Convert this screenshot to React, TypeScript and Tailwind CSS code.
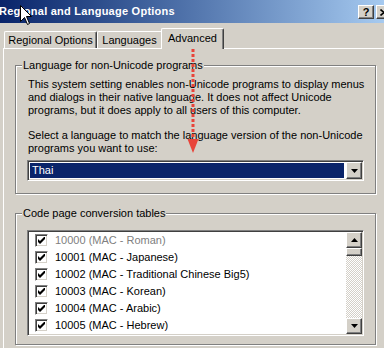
import React from "react";

const raised =
  "border border-t-white border-l-white border-r-[#404040] border-b-[#404040] shadow-[inset_-1px_-1px_0_#808080]";
const sunken =
  "border border-t-[#808080] border-l-[#808080] border-r-white border-b-white shadow-[inset_1px_1px_0_#404040,inset_-1px_-1px_0_#d4d0c8] p-[1px]";

function DownTri() {
  return (
    <svg width="7" height="4" viewBox="0 0 7 4">
      <path d="M0 0H7L3.5 4Z" fill="#000" />
    </svg>
  );
}
function UpTri() {
  return (
    <svg width="7" height="4" viewBox="0 0 7 4">
      <path d="M0 4H7L3.5 0Z" fill="#000" />
    </svg>
  );
}

function TitleBar() {
  return (
    <div className="flex items-center h-[23px] bg-linear-to-r from-[#0a246a] to-[#a6caf0]">
      <span className="-ml-[1px] font-bold text-white text-[11px] leading-[13px] tracking-[0.25px] whitespace-nowrap">
        Regional and Language Options
      </span>
      <div className="ml-auto flex gap-[2px] -mr-[8px] mt-[1px]">
        <div className={`w-[16px] h-[14px] bg-[#d4d0c8] flex items-center justify-center ${raised}`}>
          <span className="font-bold text-[11px] leading-[11px] text-black">?</span>
        </div>
        <div className={`w-[16px] h-[14px] bg-[#d4d0c8] flex items-center justify-center ${raised}`}>
          <svg width="8" height="7" viewBox="0 0 8 7">
            <path d="M0.5 0.5L7.5 6.5M7.5 0.5L0.5 6.5" stroke="#000" strokeWidth="1.6" />
          </svg>
        </div>
      </div>
    </div>
  );
}

function Tabs() {
  return (
    <div className="flex items-end h-[25px] pl-[4px]">
      <div className="w-[93px] h-[17px] flex items-center justify-center border-l border-t border-r border-l-white border-t-white border-r-[#404040] shadow-[inset_-1px_0_0_#808080] rounded-tl-[2px] rounded-tr-[2px]">
        Regional Options
      </div>
      <div className="w-[64px] h-[17px] flex items-center justify-center border-l border-t border-l-white border-t-white rounded-tl-[2px]">
        Languages
      </div>
      <div className="relative z-10 w-[63px] h-[21px] -mb-[1px] bg-[#d4d0c8] flex items-start justify-center pt-[3px] border-l border-t border-r border-l-white border-t-white border-r-[#404040] shadow-[inset_-1px_0_0_#808080] rounded-tl-[2px] rounded-tr-[2px]">
        Advanced
      </div>
    </div>
  );
}

function Group({
  label,
  className,
  children,
}: {
  label: string;
  className: string;
  children: React.ReactNode;
}) {
  return (
    <div
      className={`relative ml-[11px] w-[361px] border border-[#808080] shadow-[1px_1px_0_#fff,inset_1px_1px_0_#fff] ${className}`}
    >
      <span className="absolute left-[6px] -top-[7px] px-[1px] bg-[#d4d0c8] leading-[13px] whitespace-nowrap">
        {label}
      </span>
      {children}
    </div>
  );
}

function Check() {
  return (
    <div className={`w-[13px] h-[13px] shrink-0 ${sunken}`}>
      <div className="w-full h-full bg-white flex items-center justify-center">
        <svg width="7" height="7" viewBox="0 0 7 7">
          <path d="M0 2v3l2 2l5-5v-3l-5 5z" fill="#000" />
        </svg>
      </div>
    </div>
  );
}

const items = [
  "10000 (MAC - Roman)",
  "10001 (MAC - Japanese)",
  "10002 (MAC - Traditional Chinese Big5)",
  "10003 (MAC - Korean)",
  "10004 (MAC - Arabic)",
  "10005 (MAC - Hebrew)",
];

export default function App() {
  return (
    <div className="relative w-[384px] h-[348px] overflow-hidden bg-[#d4d0c8] text-[11px] leading-[13px] text-black font-['Liberation_Sans',Arial,sans-serif]">
      <TitleBar />
      <Tabs />
      <div className="ml-[3px] h-[300px] border-t border-l border-t-white border-l-white pt-[16px]">
        <Group label="Language for non-Unicode programs" className="h-[129px] pt-[12px]">
          <p className="pl-[12px] whitespace-nowrap">
            This system setting enables non-Unicode programs to display menus
            <br />
            and dialogs in their native language. It does not affect Unicode
            <br />
            programs, but it does apply to all users of this computer.
          </p>
          <p className="pl-[12px] mt-[12px] whitespace-nowrap">
            Select a language to match the language version of the non-Unicode
            <br />
            programs you want to use:
          </p>
          <div className={`ml-[11px] mt-[5px] w-[337px] h-[21px] ${sunken}`}>
            <div className="flex h-full bg-white">
              <div className="flex-1 m-[1px] mr-[2px] bg-[#0a246a] text-white pl-[2px] leading-[15px]">
                Thai
              </div>
              <div className={`w-[16px] h-full bg-[#d4d0c8] flex items-center justify-center ${raised}`}>
                <DownTri />
              </div>
            </div>
          </div>
        </Group>
        <Group label="Code page conversion tables" className="mt-[19px] h-[132px] pt-[16px]">
          <div className={`ml-[11px] w-[337px] h-[106px] ${sunken}`}>
            <div className="flex h-full bg-white">
              <div className="flex-1 flex flex-col">
                {items.map((t, i) => (
                  <div key={t} className="h-[17px] shrink-0 flex items-center pl-[6px]">
                    <Check />
                    <span className={i === 0 ? "ml-[7px] text-[#808080]" : "ml-[7px]"}>{t}</span>
                  </div>
                ))}
              </div>
              <div className="w-[16px] h-full flex flex-col">
                <div className={`h-[16px] bg-[#d4d0c8] flex items-center justify-center ${raised}`}>
                  <UpTri />
                </div>
                <div className={`h-[8px] bg-[#d4d0c8] ${raised}`} />
                <div className="flex-1 bg-[repeating-conic-gradient(#d4d0c8_0_25%,#ffffff_0_50%)] bg-[length:2px_2px]" />
                <div className={`h-[16px] bg-[#d4d0c8] flex items-center justify-center ${raised}`}>
                  <DownTri />
                </div>
              </div>
            </div>
          </div>
        </Group>
      </div>

      <svg className="absolute left-[185px] top-[47px]" width="16" height="110" viewBox="0 0 16 110">
        <line x1="8" y1="2" x2="8" y2="94" stroke="#e8443a" strokeWidth="3" strokeDasharray="3 2" />
        <path d="M2.5 92H13.5L8 106Z" fill="#e8443a" />
      </svg>

      <svg className="absolute left-[20px] top-[5px]" width="13" height="21" viewBox="0 0 13 21">
        <path
          d="M0.5 0.5V16.5L4.5 12.5L7.5 19.5L9.5 18.5L6.5 11.5H11.5Z"
          fill="#fff"
          stroke="#000"
          strokeWidth="1"
          strokeLinejoin="miter"
        />
      </svg>
    </div>
  );
}
